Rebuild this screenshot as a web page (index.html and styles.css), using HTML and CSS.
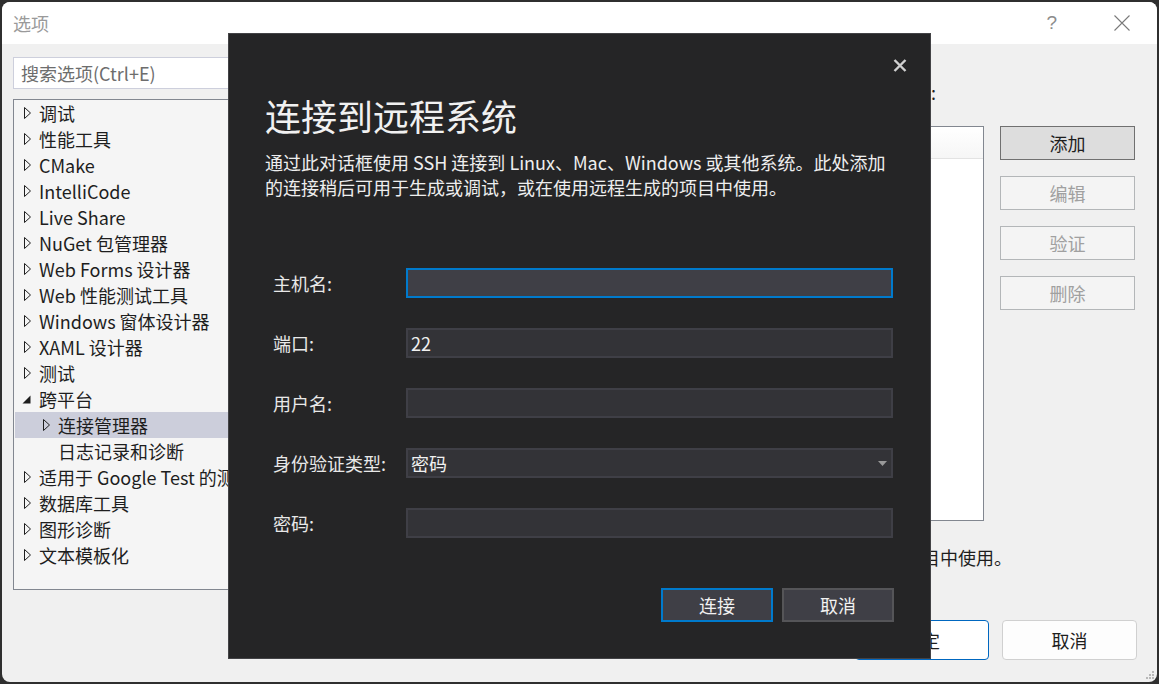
FILE: index.html
```html
<!DOCTYPE html>
<html lang="zh-CN">
<head>
    <meta charset="UTF-8">
    <title>选项</title>
    <link rel="stylesheet" href="styles.css">
</head>
<body>
    <div class="window">
        <div class="titlebar">
            <span class="title">选项</span>
            <div class="caption">
                <span class="help">?</span>
                <svg class="close" width="16" height="16" viewBox="0 0 16 16"><path d="M0.5 0.5 L15.5 15.5 M15.5 0.5 L0.5 15.5" stroke="#7a7a7a" stroke-width="1.1" fill="none"/></svg>
            </div>
        </div>

        <div class="client">
            <div class="main">
                <div class="left">
                    <div class="search">搜索选项(Ctrl+E)</div>
                    <ul class="tree">
                        <li><span class="arrow"><svg width="7" height="12" viewBox="0 0 7 12"><path d="M0.5 0.5 L6.5 6 L0.5 11.5 Z" fill="none" stroke="#1e1e1e"/></svg></span>调试</li>
                        <li><span class="arrow"><svg width="7" height="12" viewBox="0 0 7 12"><path d="M0.5 0.5 L6.5 6 L0.5 11.5 Z" fill="none" stroke="#1e1e1e"/></svg></span>性能工具</li>
                        <li><span class="arrow"><svg width="7" height="12" viewBox="0 0 7 12"><path d="M0.5 0.5 L6.5 6 L0.5 11.5 Z" fill="none" stroke="#1e1e1e"/></svg></span>CMake</li>
                        <li><span class="arrow"><svg width="7" height="12" viewBox="0 0 7 12"><path d="M0.5 0.5 L6.5 6 L0.5 11.5 Z" fill="none" stroke="#1e1e1e"/></svg></span>IntelliCode</li>
                        <li><span class="arrow"><svg width="7" height="12" viewBox="0 0 7 12"><path d="M0.5 0.5 L6.5 6 L0.5 11.5 Z" fill="none" stroke="#1e1e1e"/></svg></span>Live Share</li>
                        <li><span class="arrow"><svg width="7" height="12" viewBox="0 0 7 12"><path d="M0.5 0.5 L6.5 6 L0.5 11.5 Z" fill="none" stroke="#1e1e1e"/></svg></span>NuGet 包管理器</li>
                        <li><span class="arrow"><svg width="7" height="12" viewBox="0 0 7 12"><path d="M0.5 0.5 L6.5 6 L0.5 11.5 Z" fill="none" stroke="#1e1e1e"/></svg></span>Web Forms 设计器</li>
                        <li><span class="arrow"><svg width="7" height="12" viewBox="0 0 7 12"><path d="M0.5 0.5 L6.5 6 L0.5 11.5 Z" fill="none" stroke="#1e1e1e"/></svg></span>Web 性能测试工具</li>
                        <li><span class="arrow"><svg width="7" height="12" viewBox="0 0 7 12"><path d="M0.5 0.5 L6.5 6 L0.5 11.5 Z" fill="none" stroke="#1e1e1e"/></svg></span>Windows 窗体设计器</li>
                        <li><span class="arrow"><svg width="7" height="12" viewBox="0 0 7 12"><path d="M0.5 0.5 L6.5 6 L0.5 11.5 Z" fill="none" stroke="#1e1e1e"/></svg></span>XAML 设计器</li>
                        <li><span class="arrow"><svg width="7" height="12" viewBox="0 0 7 12"><path d="M0.5 0.5 L6.5 6 L0.5 11.5 Z" fill="none" stroke="#1e1e1e"/></svg></span>测试</li>
                        <li><span class="arrow open"><svg width="9" height="9" viewBox="0 0 9 9"><path d="M8.5 0.5 L8.5 8.5 L0.5 8.5 Z" fill="#1e1e1e"/></svg></span>跨平台</li>
                        <li class="child selected"><span class="arrow"><svg width="7" height="12" viewBox="0 0 7 12"><path d="M0.5 0.5 L6.5 6 L0.5 11.5 Z" fill="none" stroke="#1e1e1e"/></svg></span>连接管理器</li>
                        <li class="child"><span class="arrow"></span>日志记录和诊断</li>
                        <li><span class="arrow"><svg width="7" height="12" viewBox="0 0 7 12"><path d="M0.5 0.5 L6.5 6 L0.5 11.5 Z" fill="none" stroke="#1e1e1e"/></svg></span>适用于 Google Test 的测试适配器</li>
                        <li><span class="arrow"><svg width="7" height="12" viewBox="0 0 7 12"><path d="M0.5 0.5 L6.5 6 L0.5 11.5 Z" fill="none" stroke="#1e1e1e"/></svg></span>数据库工具</li>
                        <li><span class="arrow"><svg width="7" height="12" viewBox="0 0 7 12"><path d="M0.5 0.5 L6.5 6 L0.5 11.5 Z" fill="none" stroke="#1e1e1e"/></svg></span>图形诊断</li>
                        <li><span class="arrow"><svg width="7" height="12" viewBox="0 0 7 12"><path d="M0.5 0.5 L6.5 6 L0.5 11.5 Z" fill="none" stroke="#1e1e1e"/></svg></span>文本模板化</li>
                    </ul>
                </div>

                <div class="right">
                    <div class="right-label">远程连接:</div>
                    <div class="right-body">
                        <div class="listbox"><div class="list-head"></div></div>
                        <div class="side-btns">
                            <button class="side-btn">添加</button>
                            <button class="side-btn" disabled>编辑</button>
                            <button class="side-btn" disabled>验证</button>
                            <button class="side-btn" disabled>删除</button>
                        </div>
                    </div>
                    <p class="right-note">或在使用远程生成的项目中使用。</p>
                </div>
            </div>

            <div class="footer">
                <button class="foot-btn ok">确定</button>
                <button class="foot-btn">取消</button>
            </div>
        </div>

        <svg class="grip" width="10" height="10" viewBox="0 0 10 10" fill="#b8b8b8">
            <rect x="7" y="1" width="2" height="2"/>
            <rect x="4" y="4" width="2" height="2"/><rect x="7" y="4" width="2" height="2"/>
            <rect x="1" y="7" width="2" height="2"/><rect x="4" y="7" width="2" height="2"/><rect x="7" y="7" width="2" height="2"/>
        </svg>
    </div>

    <div class="dialog">
        <div class="dlg-head">
            <svg width="14" height="13" viewBox="0 0 14 13"><path d="M1.5 1 L12.5 12 M12.5 1 L1.5 12" stroke="#d0d0d0" stroke-width="2.4" fill="none"/></svg>
        </div>
        <h1 class="dlg-title">连接到远程系统</h1>
        <p class="dlg-desc">通过此对话框使用 SSH 连接到 Linux、Mac、Windows 或其他系统。此处添加<br>的连接稍后可用于生成或调试，或在使用远程生成的项目中使用。</p>

        <div class="form">
            <div class="row">
                <label>主机名:</label>
                <div class="field focus"></div>
            </div>
            <div class="row">
                <label>端口:</label>
                <div class="field">22</div>
            </div>
            <div class="row">
                <label>用户名:</label>
                <div class="field"></div>
            </div>
            <div class="row">
                <label>身份验证类型:</label>
                <div class="field combo">
                    <span>密码</span>
                    <svg width="9" height="5" viewBox="0 0 9 5"><path d="M0 0 L9 0 L4.5 5 Z" fill="#999999"/></svg>
                </div>
            </div>
            <div class="row">
                <label>密码:</label>
                <div class="field"></div>
            </div>
        </div>

        <div class="dlg-buttons">
            <button class="dlg-btn primary">连接</button>
            <button class="dlg-btn">取消</button>
        </div>
    </div>
</body>
</html>
```

FILE: styles.css
```css
body {
    margin: 0;
    background-color: #2f2f2f;
    font-family: "Noto Sans CJK SC", sans-serif;
}

button {
    font-family: inherit;
    padding: 0;
}

.window {
    position: relative;
    margin: 2px;
    width: 1155px;
    height: 680px;
    background-color: #f0f0f0;
    border-radius: 8px;
    overflow: hidden;
    display: flex;
    flex-direction: column;
}

.titlebar {
    height: 42px;
    flex-shrink: 0;
    background-color: #fff;
    display: flex;
    align-items: center;
    justify-content: space-between;
    padding-left: 11px;
}

.title {
    font-size: 18px;
    color: #9a9a9a;
}

.caption {
    display: flex;
    align-items: center;
    gap: 57px;
    margin-right: 27px;
}

.help {
    font-size: 19px;
    color: #8c8c8c;
    font-family: "Liberation Sans", sans-serif;
}

.client {
    flex: 1;
    display: flex;
    flex-direction: column;
    padding: 13px 20px 22px 11px;
}

.main {
    flex: 1;
    display: flex;
}

/* left pane */

.left {
    width: 250px;
    display: flex;
    flex-direction: column;
    gap: 10px;
}

.search {
    height: 32px;
    box-sizing: border-box;
    border: 1px solid #cdcfdc;
    background-color: #fff;
    padding-left: 7px;
    font-size: 18px;
    line-height: 30px;
    color: #6d6d6d;
}

.tree {
    height: 491px;
    box-sizing: border-box;
    margin: 0;
    padding: 0 0 0 1px;
    list-style: none;
    border: 1px solid #828790;
    background-color: #f5f5f5;
    overflow: hidden;
}

.tree li {
    height: 26px;
    display: flex;
    align-items: center;
    padding-left: 9px;
    font-size: 18px;
    color: #1e1e1e;
    white-space: nowrap;
}

.tree li.child {
    padding-left: 28px;
}

.tree li.selected {
    background-color: #cccedb;
}

.arrow {
    width: 15px;
    flex-shrink: 0;
    display: flex;
    align-items: center;
}

.arrow.open {
    margin-left: -2px;
    width: 17px;
}

/* right pane */

.right {
    flex: 1;
    margin-left: 16px;
    margin-right: 2px;
    display: flex;
    flex-direction: column;
}

.right-label {
    margin-top: 23px;
    height: 24px;
    line-height: 24px;
    font-size: 18px;
    color: #1e1e1e;
    text-align: right;
    padding-right: 199px;
}

.right-body {
    display: flex;
    gap: 16px;
    margin-top: 22px;
}

.listbox {
    flex: 1;
    height: 395px;
    box-sizing: border-box;
    border: 1px solid #828790;
    background-color: #fff;
}

.list-head {
    height: 31px;
    border-bottom: 1px solid #e3e3e3;
    background: linear-gradient(#ffffff, #f6f6f6);
}

.side-btns {
    width: 135px;
    display: flex;
    flex-direction: column;
    gap: 16px;
}

.side-btn {
    height: 34px;
    border: 1px solid #707070;
    background-color: #dddddd;
    font-size: 18px;
    color: #1e1e1e;
}

.side-btn:disabled {
    border-color: #b3b6b8;
    background-color: #f4f4f4;
    color: #a0a0a0;
}

.right-note {
    margin: 26px 0 0;
    font-size: 18px;
    line-height: 20px;
    color: #1e1e1e;
    text-align: right;
    padding-right: 123px;
    white-space: nowrap;
}

.footer {
    display: flex;
    justify-content: flex-end;
    gap: 13px;
}

.foot-btn {
    width: 135px;
    height: 40px;
    border: 1px solid #d0d0d0;
    border-radius: 4px;
    background-color: #fdfdfd;
    font-size: 18px;
    color: #1e1e1e;
}

.foot-btn.ok {
    width: 134px;
    border-color: #0067c0;
    background-color: #fff;
}

.grip {
    position: absolute;
    right: 2px;
    bottom: 2px;
}

/* remote connection dialog */

.dialog {
    position: absolute;
    left: 228px;
    top: 33px;
    width: 703px;
    height: 626px;
    box-sizing: border-box;
    background-color: #252526;
    border: 1px solid #434346;
    padding: 0 37px 0 36px;
    color: #f1f1f1;
}

.dlg-head {
    display: flex;
    justify-content: flex-end;
    margin-right: -14px;
    padding-top: 25px;
    height: 13px;
}

.dlg-title {
    margin: 21px 0 0;
    font-size: 36px;
    font-weight: 400;
    line-height: 44px;
}

.dlg-desc {
    margin: 13px 0 0;
    font-size: 18px;
    line-height: 25px;
    color: #eeeeee;
    white-space: nowrap;
}

.form {
    margin-top: 68px;
    padding-left: 8px;
    display: flex;
    flex-direction: column;
    gap: 30px;
}

.row {
    display: flex;
    align-items: center;
    height: 30px;
}

.row label {
    width: 133px;
    flex-shrink: 0;
    font-size: 18px;
    color: #e8e8e8;
}

.field {
    flex: 1;
    height: 30px;
    box-sizing: border-box;
    border: 2px solid #3f3f46;
    background-color: #333337;
    padding-left: 3px;
    font-size: 18px;
    line-height: 26px;
    color: #f1f1f1;
}

.field.focus {
    border-color: #007acc;
    background-color: #3f3f46;
}

.field.combo {
    display: flex;
    align-items: center;
    justify-content: space-between;
    padding-right: 4px;
}

.dlg-buttons {
    margin-top: 50px;
    margin-right: -1px;
    display: flex;
    justify-content: flex-end;
    gap: 9px;
}

.dlg-btn {
    width: 112px;
    height: 34px;
    border: 2px solid #555558;
    background-color: #3f3f46;
    font-size: 18px;
    color: #f1f1f1;
}

.dlg-btn.primary {
    border-color: #007acc;
}
```
